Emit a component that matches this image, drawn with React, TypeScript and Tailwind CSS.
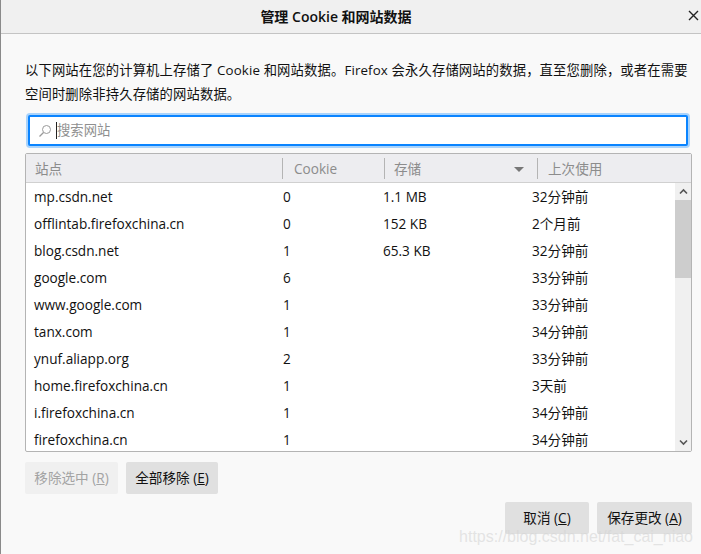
const rows = [
  { site: 'mp.csdn.net', cookie: '0', storage: '1.1 MB', last: '32分钟前' },
  { site: 'offlintab.firefoxchina.cn', cookie: '0', storage: '152 KB', last: '2个月前' },
  { site: 'blog.csdn.net', cookie: '1', storage: '65.3 KB', last: '32分钟前' },
  { site: 'google.com', cookie: '6', storage: '', last: '33分钟前' },
  { site: 'www.google.com', cookie: '1', storage: '', last: '33分钟前' },
  { site: 'tanx.com', cookie: '1', storage: '', last: '34分钟前' },
  { site: 'ynuf.aliapp.org', cookie: '2', storage: '', last: '33分钟前' },
  { site: 'home.firefoxchina.cn', cookie: '1', storage: '', last: '3天前' },
  { site: 'i.firefoxchina.cn', cookie: '1', storage: '', last: '34分钟前' },
  { site: 'firefoxchina.cn', cookie: '1', storage: '', last: '34分钟前' },
];

const font = "font-['Open_Sans','Noto_Sans_CJK_SC',sans-serif]";

function Chevron({ up }: { up?: boolean }) {
  return (
    <svg width="9" height="7" viewBox="0 0 9 7" className="text-[#555]">
      <path d={up ? 'M1 5.5 L4.5 2 L8 5.5' : 'M1 1.5 L4.5 5 L8 1.5'} fill="none" stroke="currentColor" strokeWidth="1.6" />
    </svg>
  );
}

function Btn({ label, hot, disabled, className }: { label: string; hot: string; disabled?: boolean; className: string }) {
  return (
    <div
      className={`flex h-8 items-center justify-center rounded-[2px] pt-px text-[13.6px] ${
        disabled ? 'bg-[#f0f0f0] text-[#a3a3a3]' : 'bg-[#e0e0e0] text-[#111]'
      } ${className}`}
    >
      {label}&nbsp;(<span className="underline">{hot}</span>)
    </div>
  );
}

export default function App() {
  return (
    <div className={`relative flex h-[554px] w-[701px] flex-col overflow-hidden border-l border-[#8a8a8a] bg-[#f9f9f9] text-[#111] ${font}`}>
      <div className="relative flex h-[34px] shrink-0 items-center justify-center border-b border-[#c4c4c4] bg-[#f0f0f0] pr-[30px]">
        <span className="text-[14px] font-semibold text-[#111]">管理 Cookie 和网站数据</span>
        <svg width="11" height="11" viewBox="0 0 11 11" className="absolute right-[2px] top-[10px] text-[#222]">
          <path d="M1 1 L10 10 M10 1 L1 10" stroke="currentColor" strokeWidth="1.4" />
        </svg>
      </div>

      <div className="flex flex-1 flex-col pl-[24px] pr-[9px]">
        <p className="mt-[24px] w-[670px] text-[13.33px] leading-[24px] tracking-[0.13px] text-[#111]">
          以下网站在您的计算机上存储了 Cookie 和网站数据。Firefox 会永久存储网站的数据，直至您删除，或者在需要
          <br />
          空间时删除非持久存储的网站数据。
        </p>

        <div className="ml-[3px] mt-[9px] flex h-[31px] w-[660px] items-center rounded-[2px] border-2 border-[#0a84ff] bg-white shadow-[0_0_0_2px_#a9d3fb]">
          <svg width="16" height="16" viewBox="0 0 16 16" className="ml-[7px] text-[#9a9a9a]">
            <circle cx="9.5" cy="6.5" r="4" fill="none" stroke="currentColor" strokeWidth="1" />
            <path d="M6.5 9.5 L2.5 13.5" stroke="currentColor" strokeWidth="1.2" />
          </svg>
          <span className="ml-[3px] h-[17px] w-px bg-[#222]" />
          <span className="text-[13.33px] text-[#8f8f8f]">搜索网站</span>
        </div>

        <div className="mt-[7px] h-[299px] w-[667px] rounded-[2px] border border-[#b4b4b4] bg-white">
          <div className="flex h-[29px] items-center border-b border-[#d0d0d0] bg-[#ededf0] text-[13.6px] text-[#8c8c8c]">
            <div className="w-[256px] pl-[9px] pt-[2px]">站点</div>
            <div className="flex h-[21px] w-[102px] items-center border-l border-[#b4b4b4] pl-[11px] pt-[2px]">Cookie</div>
            <div className="flex h-[21px] w-[153px] items-center justify-between border-l border-[#b4b4b4] pl-[9px] pr-[13px] pt-[2px]">
              存储
              <span className="h-0 w-0 border-x-[5px] border-t-[5px] border-x-transparent border-t-[#777]" />
            </div>
            <div className="flex h-[21px] items-center border-l border-[#b4b4b4] pl-[10px] pt-[2px]">上次使用</div>
          </div>

          <div className="flex">
            <div className="h-[268px] flex-1 overflow-hidden pt-px text-[13.6px] text-[#111]">
              {rows.map((r) => (
                <div key={r.site} className="flex h-[27px] items-center">
                  <div className="w-[257px] pl-[8px]">{r.site}</div>
                  <div className="w-[100px]">{r.cookie}</div>
                  <div className="w-[149px]">{r.storage}</div>
                  <div>{r.last}</div>
                </div>
              ))}
            </div>
            <div className="flex h-[268px] w-[16px] flex-col bg-[#f0f0f0]">
              <div className="flex h-[17px] items-center justify-center">
                <Chevron up />
              </div>
              <div className="h-[78px] bg-[#cdcdcd]" />
              <div className="flex-1" />
              <div className="flex h-[17px] items-center justify-center">
                <Chevron />
              </div>
            </div>
          </div>
        </div>

        <div className="mt-[10px] flex gap-2">
          <Btn label="移除选中" hot="R" disabled className="w-[93px]" />
          <Btn label="全部移除" hot="E" className="w-[92px]" />
        </div>

        <div className="mt-2 flex justify-end gap-2">
          <Btn label="取消" hot="C" className="w-[84px]" />
          <Btn label="保存更改" hot="A" className="w-[95px]" />
        </div>
      </div>

      <span className="absolute bottom-[9px] right-[8px] font-['Liberation_Sans',sans-serif] text-[16px] leading-none text-[#d4d4d4]/60">
        https://blog.csdn.net/fat_cai_niao
      </span>
    </div>
  );
}
